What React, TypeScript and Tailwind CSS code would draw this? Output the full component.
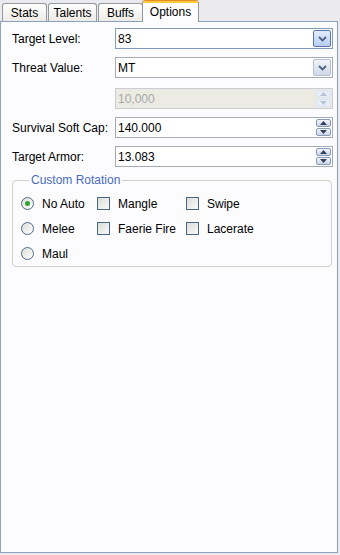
import React from 'react';

const Chevron = () => (
  <svg width="9" height="6" viewBox="0 0 9 6">
    <polyline points="1,1 4.5,4.5 8,1" fill="none" stroke="#4d6185" strokeWidth="1.8" />
  </svg>
);

const Combo = ({ value, focused }: { value: string; focused?: boolean }) => (
  <div
    className={`flex-1 h-[21px] flex items-stretch bg-white border ${
      focused ? 'border-[#7f9db9]' : 'border-[#a5acb5]'
    }`}
  >
    <div className="flex-1 flex items-center pl-[2px] text-black">{value}</div>
    <div
      className={`w-[18px] my-[1px] mr-[1px] flex items-center justify-center border rounded-[2px] ${
        focused
          ? 'border-[#5a76a8] bg-gradient-to-b from-[#e3ecfd] to-[#b9cdf3]'
          : 'border-[#b4bfd1] bg-gradient-to-b from-[#f1f4f9] to-[#cfd9e8]'
      }`}
    >
      <Chevron />
    </div>
  </div>
);

const Arrow = ({ up, disabled }: { up?: boolean; disabled?: boolean }) => (
  <svg width="7" height="4" viewBox="0 0 7 4">
    <polygon
      points={up ? '0,4 3.5,0 7,4' : '0,0 3.5,4 7,0'}
      fill={disabled ? '#b9c4d6' : '#33415a'}
    />
  </svg>
);

const Spin = ({ value, disabled }: { value: string; disabled?: boolean }) => (
  <div
    className={`flex-1 h-[21px] flex items-stretch border ${
      disabled ? 'bg-[#ebebe4] border-[#c9ccd3]' : 'bg-white border-[#a5acb5]'
    }`}
  >
    <div
      className={`flex-1 flex items-center pl-[2px] ${disabled ? 'text-[#a8a8a8]' : 'text-black'}`}
    >
      {value}
    </div>
    <div className="w-[15px] my-[1px] mr-[1px] flex flex-col gap-[1px]">
      {[true, false].map((up) => (
        <div
          key={String(up)}
          className={`flex-1 flex items-center justify-center border rounded-[2px] ${
            disabled
              ? 'border-[#dbe3ef] bg-[#e6edf8]'
              : 'border-[#8a9bb8] bg-gradient-to-b from-[#f3f6fb] to-[#c9d5e8]'
          }`}
        >
          <Arrow up={up} disabled={disabled} />
        </div>
      ))}
    </div>
  </div>
);

const Row = ({ label, children, className = '' }: { label: string; children: React.ReactNode; className?: string }) => (
  <div className={`flex items-center ${className}`}>
    <div className="w-[103px] text-black">{label}</div>
    {children}
  </div>
);

const Radio = ({ label, checked }: { label: string; checked?: boolean }) => (
  <div className="flex items-center h-[25px]">
    <div className="w-[13px] h-[13px] rounded-full border border-[#4f6a8c] bg-gradient-to-br from-[#dcdcd7] to-white flex items-center justify-center">
      {checked && <div className="w-[5px] h-[5px] rounded-full bg-[#2fa52f]" />}
    </div>
    <span className="ml-[8px] text-black">{label}</span>
  </div>
);

const Check = ({ label }: { label: string }) => (
  <div className="flex items-center h-[25px]">
    <div className="w-[13px] h-[13px] border border-[#4a6687] bg-gradient-to-br from-[#dcdcd7] to-[#fafafa]" />
    <span className="ml-[8px] text-black">{label}</span>
  </div>
);

const tabs = ['Stats', 'Talents', 'Buffs'];
const tabWidths = ['w-[45px]', 'w-[49px]', 'w-[45px]'];

export default function App() {
  return (
    <div className="w-[340px] h-[555px] bg-[#ebeaef] font-['Liberation_Sans',Arial,sans-serif] text-[12px] leading-none overflow-hidden">
      <div className="flex items-end h-[21px] pl-[2px]">
        {tabs.map((t, i) => (
          <div
            key={t}
            className={`${tabWidths[i]} h-[18px] mr-[1px] flex items-center justify-center border border-b-0 border-[#919b9c] rounded-t-[3px] bg-gradient-to-b from-white to-[#ecebe6] text-black`}
          >
            {t}
          </div>
        ))}
        <div className="relative z-10 -ml-[2px] w-[57px] h-[22px] -mb-px flex flex-col border-x border-[#919b9c] rounded-t-[3px] bg-[#fcfcfe] overflow-hidden">
          <div className="h-[1px] bg-[#e68b2c]" />
          <div className="h-[2px] bg-[#ffc83c]" />
          <div className="flex-1 flex items-center justify-center text-black pb-[1px]">Options</div>
        </div>
      </div>
      <div className="w-[338px] h-[532px] border border-[#8ca1bc] bg-[#fcfcfe] pl-[11px] pr-[4px] pt-[6px]">
        <Row label="Target Level:">
          <Combo value="83" focused />
        </Row>
        <Row label="Threat Value:" className="mt-[8px]">
          <Combo value="MT" />
        </Row>
        <Row label="" className="mt-[10px]">
          <Spin value="10,000" disabled />
        </Row>
        <Row label="Survival Soft Cap:" className="mt-[8px]">
          <Spin value="140.000" />
        </Row>
        <Row label="Target Armor:" className="mt-[8px]">
          <Spin value="13.083" />
        </Row>
        <fieldset className="mt-[7px] mr-[1px] border border-[#d0d0c8] rounded-[4px] pl-[8px] pt-[5px] pb-0">
          <legend className="ml-[8px] px-[2px] text-[#4a6cc0]">Custom Rotation</legend>
          <div className="grid grid-cols-[76px_89px_auto]">
            <Radio label="No Auto" checked />
            <Check label="Mangle" />
            <Check label="Swipe" />
            <Radio label="Melee" />
            <Check label="Faerie Fire" />
            <Check label="Lacerate" />
            <Radio label="Maul" />
          </div>
        </fieldset>
      </div>
    </div>
  );
}
